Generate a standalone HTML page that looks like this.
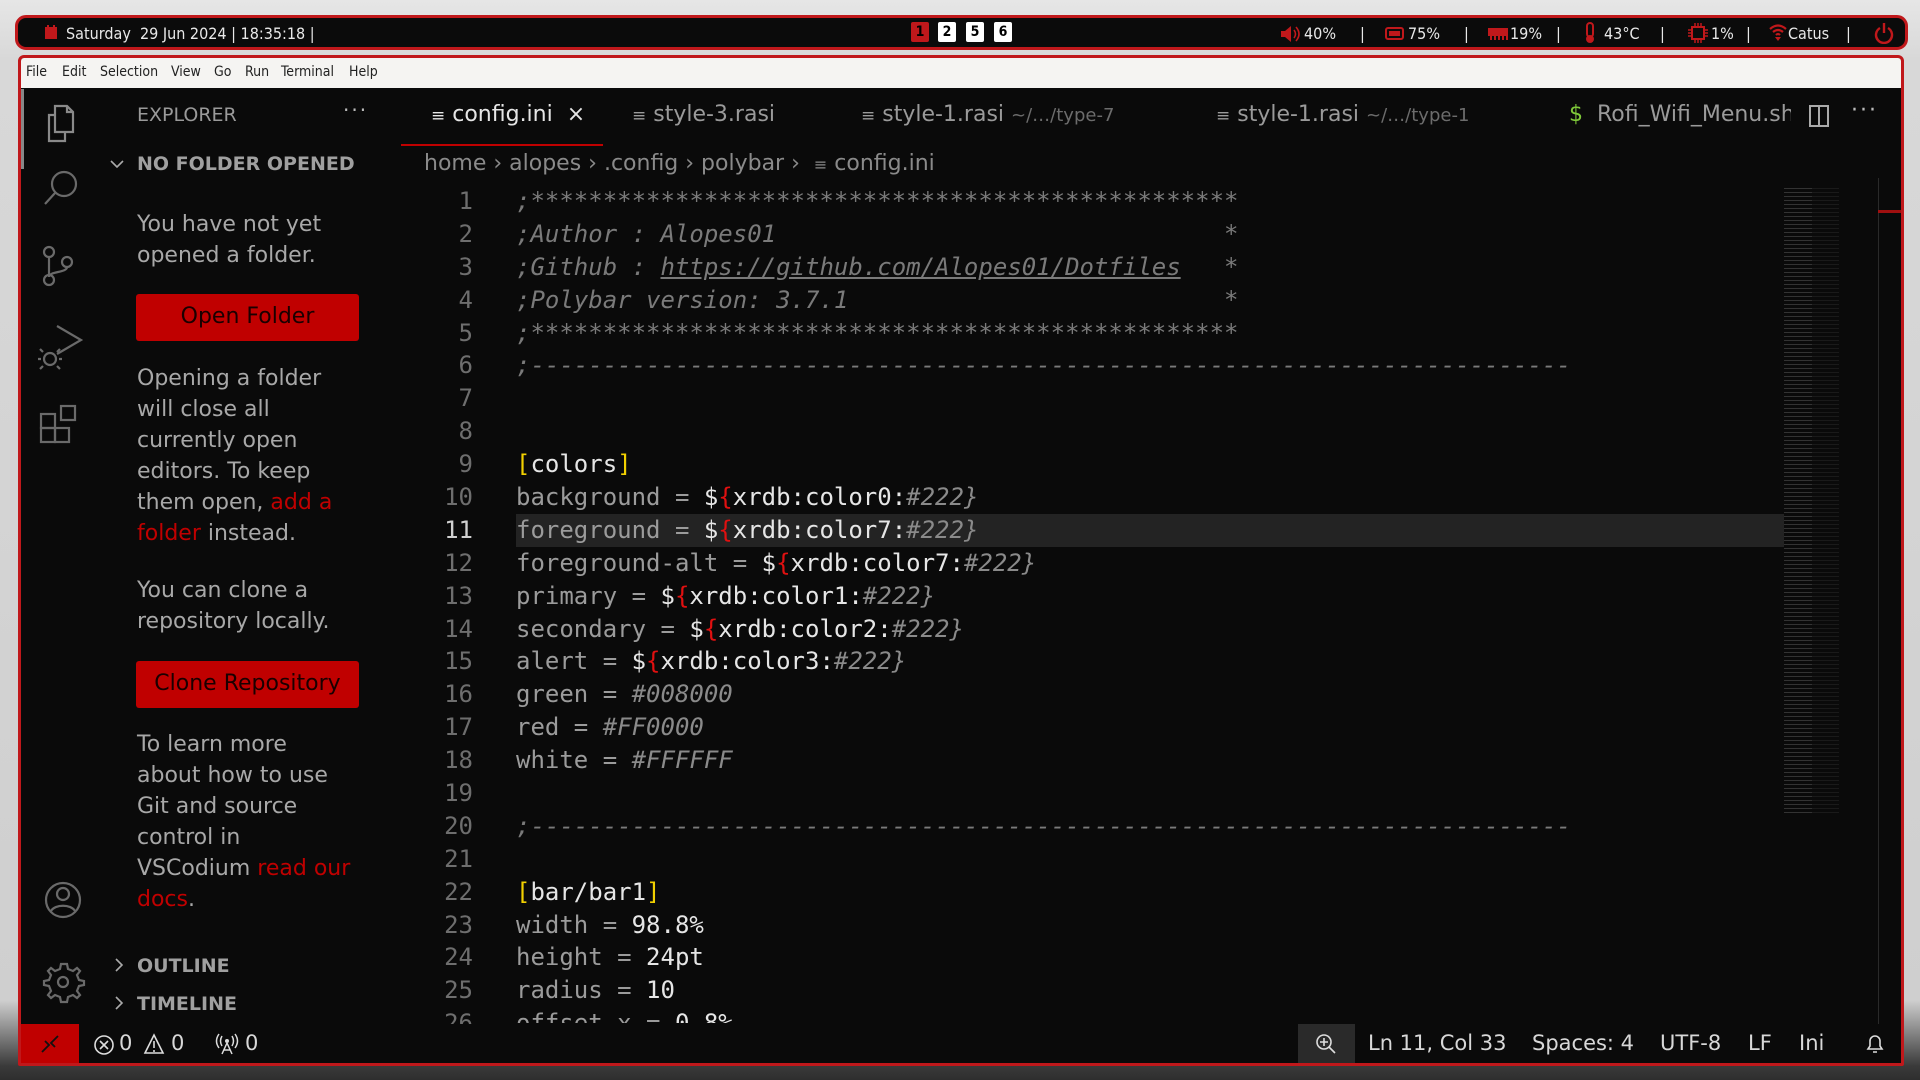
<!DOCTYPE html>
<html><head><meta charset="utf-8"><style>
*{margin:0;padding:0;box-sizing:border-box}
body{width:1920px;height:1080px;overflow:hidden;background:linear-gradient(#e6e6e6 0,#d8d8d8 60px,#cfcfcf 1000px,#3a3a3a 1066px,#2e2e2e 1080px);font-family:"DejaVu Sans","Liberation Sans",sans-serif;position:relative}
.abs{position:absolute}
#bar{left:15px;top:15px;width:1893px;height:35px;background:#0b0b0b;border:3px solid #c0181b;border-radius:11px;color:#e8e8e8;font-family:"DejaVu Sans Condensed","DejaVu Sans",sans-serif;font-size:16px}
#bar span{position:absolute;top:6px;white-space:pre}
#bar svg{position:absolute;top:7px}
.ws{position:absolute;top:4px;width:18px;height:20px;background:#fff;color:#000;font-weight:bold;font-size:14px;text-align:center;line-height:20px;border-radius:2px}
#win{left:18px;top:55px;width:1886px;height:1011px;border:3px solid #c0181b;background:#0a0a0a;border-radius:6px 6px 2px 2px;overflow:hidden}
#menu{left:0;top:0;width:100%;height:30px;background:#f5f4f2;font-family:"DejaVu Sans Condensed","DejaVu Sans",sans-serif;font-size:14px;color:#222}
#menu span{position:absolute;top:6px}
.side{color:#a8a8a8;font-size:22px;line-height:31px}
.btn{position:absolute;left:115px;width:223px;height:47px;background:#c00000;border-radius:3px;color:#1a0000;font-size:22px;text-align:center;line-height:46px}
.red{color:#c00000}
.tab{position:absolute;top:44px;font-size:22px;color:#9a9a9a;white-space:pre}
.tab .d{font-size:18px;color:#6c6c6c}
.code{position:absolute;left:495px;top:127px;font-family:"DejaVu Sans Mono","Liberation Mono",monospace;font-size:24px;color:#9b9b9b}
.code div{height:32.9px;line-height:32.9px;white-space:pre}
.ln{position:absolute;left:378px;top:127px;width:74px;text-align:right;font-family:"DejaVu Sans Mono","Liberation Mono",monospace;font-size:24px;color:#6e6e6e}
.ln div{height:32.9px;line-height:32.9px}
.c{font-style:italic;color:#7a7a7a}
.w{color:#e6e6e6}
.r{color:#e01010}
.y{color:#f2d000}
.h{font-style:italic;color:#8a8a8a}
#status{left:0;top:966px;width:100%;height:39px;background:#0a0a0a;color:#d8d8d8;font-size:21px}
#status span{position:absolute;top:7px;white-space:pre}
.mm{position:absolute;left:1766px;height:2px;background:#4a4a4a}
</style></head><body>
<div id="bar" class="abs">
<svg style="left:26px;top:6px" width="14" height="16"><rect x="1" y="3" width="12" height="12" fill="#c0181b"/><path d="M4 1v4M10 1v4" stroke="#c0181b" stroke-width="2"/></svg>
<span style="left:48px">Saturday  29 Jun 2024 | 18:35:18 |</span>
<div class="ws" style="left:893px;background:#c0181b;color:#000">1</div>
<div class="ws" style="left:920px">2</div>
<div class="ws" style="left:948px">5</div>
<div class="ws" style="left:976px">6</div>
<svg style="left:1262px" width="20" height="18"><path d="M1 6h4l6-5v16l-6-5H1z" fill="#c0181b"/><path d="M14 5q3 4 0 8M16 2q6 7 0 14" stroke="#c0181b" stroke-width="1.6" fill="none"/></svg><span style="left:1286px">40%</span>
<span style="left:1342px">|</span>
<svg style="left:1367px;top:9px" width="20" height="14"><rect x="1" y="1" width="17" height="11" rx="2" fill="none" stroke="#c0181b" stroke-width="2"/><rect x="4" y="4" width="11" height="5" fill="#c0181b"/></svg><span style="left:1390px">75%</span>
<span style="left:1446px">|</span>
<svg style="left:1470px" width="20" height="16"><rect x="0" y="3" width="20" height="8" fill="#c0181b"/><path d="M3 11v4M7 11v4M11 11v4M15 11v4M19 11v4" stroke="#c0181b" stroke-width="2"/></svg><span style="left:1492px">19%</span>
<span style="left:1538px">|</span>
<svg style="left:1566px;top:4px" width="12" height="22"><rect x="3" y="1" width="6" height="14" rx="3" fill="none" stroke="#c0181b" stroke-width="2"/><circle cx="6" cy="17" r="4" fill="#c0181b"/></svg><span style="left:1586px">43°C</span>
<span style="left:1642px">|</span>
<svg style="left:1670px;top:5px" width="20" height="20"><rect x="4" y="4" width="12" height="12" fill="none" stroke="#c0181b" stroke-width="2"/><path d="M7 0v4M10 0v4M13 0v4M7 16v4M10 16v4M13 16v4M0 7h4M0 10h4M0 13h4M16 7h4M16 10h4M16 13h4" stroke="#c0181b" stroke-width="1.5"/></svg><span style="left:1693px">1%</span>
<span style="left:1728px">|</span>
<svg style="left:1750px;top:5px" width="20" height="18"><path d="M2 6q8-7 16 0M5 9q5-4 10 0M8 12q2-2 4 0" stroke="#c0181b" stroke-width="2.2" fill="none"/><path d="M10 18l-3-4h6z" fill="#c0181b"/></svg><span style="left:1770px">Catus</span>
<span style="left:1828px">|</span>
<svg style="left:1856px;top:4px" width="20" height="22"><path d="M6 6a8 8 0 1 0 8 0" stroke="#c0181b" stroke-width="2.4" fill="none"/><path d="M10 1v10" stroke="#c0181b" stroke-width="2.4"/></svg>
</div>
<div id="win" class="abs">
<div id="menu" class="abs"><span style="left:5px">File</span><span style="left:41px">Edit</span><span style="left:79px">Selection</span><span style="left:150px">View</span><span style="left:193px">Go</span><span style="left:224px">Run</span><span style="left:260px">Terminal</span><span style="left:328px">Help</span></div>
<div class="abs" style="left:0;top:31px;width:3px;height:80px;background:#888"></div>
<svg class="abs" style="left:0;top:30px" width="80" height="940" fill="none" stroke="#6a6a6a" stroke-width="2.2">
<path d="M34 18h12l6 6v20H34z M46 18v6h6 M34 27h-6v26h16v-9" stroke="#8a8a8a"/>
<circle cx="43" cy="96" r="12"/><path d="M34 105l-10 11"/>
<circle cx="28" cy="164" r="5"/><circle cx="28" cy="192" r="5"/><circle cx="46" cy="174" r="5"/><path d="M28 169v18 M46 179c0 6-18 4-18 10"/>
<path d="M36 238l24 14-24 14" /><circle cx="29" cy="271" r="6"/><path d="M20 271h-3 M38 271h3 M22 264l-3-3 M36 264l3-3 M22 278l-3 3 M36 278l3 3"/>
<rect x="20" y="326" width="14" height="14"/><rect x="20" y="340" width="14" height="14"/><rect x="34" y="340" width="14" height="14"/><rect x="40" y="318" width="14" height="14"/>
<circle cx="42" cy="812" r="17"/><circle cx="42" cy="806" r="6"/><path d="M30 823c4-7 20-7 24 0"/>
<circle cx="42" cy="894" r="5"/><path d="M42 876l4 0 1 5 5 2 4-3 3 3-3 4 2 5 5 1v4l-5 1-2 5 3 4-3 3-4-3-5 2-1 5h-6l-1-5-5-2-4 3-3-3 3-4-2-5-5-1v-4l5-1 2-5-3-4 3-3 4 3 5-2 1-5z"/>
</svg>
<div class="abs" style="left:116px;top:46px;font-size:19px;color:#9a9a9a">EXPLORER</div>
<div class="abs" style="left:322px;top:40px;font-size:20px;color:#bbb;letter-spacing:2px">···</div>
<svg class="abs" style="left:88px;top:100px" width="16" height="12"><path d="M2 3l6 6 6-6" stroke="#aaa" stroke-width="1.6" fill="none"/></svg>
<div class="abs" style="left:116px;top:95px;font-size:19px;font-weight:bold;color:#a0a0a0">NO FOLDER OPENED</div>
<div class="abs side" style="left:116px;top:151px">You have not yet<br>opened a folder.</div>
<div class="btn" style="top:236px">Open Folder</div>
<div class="abs side" style="left:116px;top:305px">Opening a folder<br>will close all<br>currently open<br>editors. To keep<br>them open, <span class="red">add a</span><br><span class="red">folder</span> instead.</div>
<div class="abs side" style="left:116px;top:517px">You can clone a<br>repository locally.</div>
<div class="btn" style="top:603px">Clone Repository</div>
<div class="abs side" style="left:116px;top:671px">To learn more<br>about how to use<br>Git and source<br>control in<br>VSCodium <span class="red">read our</span><br><span class="red">docs</span>.</div>
<svg class="abs" style="left:92px;top:899px" width="12" height="16"><path d="M3 2l6 6-6 6" stroke="#aaa" stroke-width="1.6" fill="none"/></svg>
<div class="abs" style="left:116px;top:897px;font-size:19px;font-weight:bold;color:#a0a0a0">OUTLINE</div>
<svg class="abs" style="left:92px;top:937px" width="12" height="16"><path d="M3 2l6 6-6 6" stroke="#aaa" stroke-width="1.6" fill="none"/></svg>
<div class="abs" style="left:116px;top:935px;font-size:19px;font-weight:bold;color:#a0a0a0">TIMELINE</div>
<div class="abs" style="left:380px;top:86px;width:202px;height:2px;background:#c00000"></div>
<div class="tab" style="left:410px;color:#e6e6e6"><span style="font-size:17px">&#x2261;</span> config.ini  ×</div>
<div class="tab" style="left:611px"><span style="font-size:17px">&#x2261;</span> style-3.rasi</div>
<div class="tab" style="left:840px"><span style="font-size:17px">&#x2261;</span> style-1.rasi <span class="d">~/…/type-7</span></div>
<div class="tab" style="left:1195px"><span style="font-size:17px">&#x2261;</span> style-1.rasi <span class="d">~/…/type-1</span></div>
<div class="tab" style="left:1548px;width:222px;overflow:hidden"><span style="color:#7ec839">$</span>  Rofi_Wifi_Menu.sh</div>
<div class="abs" style="left:1788px;top:47px;width:20px;height:22px;border:2px solid #aaa"><div style="position:absolute;left:7px;top:0;width:2px;height:18px;background:#aaa"></div></div>
<div class="tab" style="left:1830px;color:#bbb;letter-spacing:2px;top:40px">···</div>
<div class="abs" style="left:403px;top:93px;font-size:22px;color:#8a8a8a;white-space:pre">home › alopes › .config › polybar ›  <span style="font-size:16px">&#x2261;</span> config.ini</div>
<div class="abs" style="left:495px;top:456px;width:1280px;height:33px;background:#232323"></div>
<div class="ln"><div>1</div><div>2</div><div>3</div><div>4</div><div>5</div><div>6</div><div>7</div><div>8</div><div>9</div><div>10</div><div style="color:#d0d0d0">11</div><div>12</div><div>13</div><div>14</div><div>15</div><div>16</div><div>17</div><div>18</div><div>19</div><div>20</div><div>21</div><div>22</div><div>23</div><div>24</div><div>25</div><div>26</div></div>
<div class="code" style="height:838px;overflow:hidden"><div class="c">;*************************************************</div><div class="c">;Author : Alopes01                               *</div><div class="c">;Github : <u>https://github.com/Alopes01/Dotfiles</u>   *</div><div class="c">;Polybar version: 3.7.1                          *</div><div class="c">;*************************************************</div><div class="c">;------------------------------------------------------------------------</div><div> </div><div> </div><div><span class="y">[</span><span class="w">colors</span><span class="y">]</span></div><div>background = <span class="w">$</span><span class="r">{</span><span class="w">xrdb:color0:</span><span class="h">#222}</span></div><div>foreground = <span class="w">$</span><span class="r">{</span><span class="w">xrdb:color7:</span><span class="h">#222}</span></div><div>foreground-alt = <span class="w">$</span><span class="r">{</span><span class="w">xrdb:color7:</span><span class="h">#222}</span></div><div>primary = <span class="w">$</span><span class="r">{</span><span class="w">xrdb:color1:</span><span class="h">#222}</span></div><div>secondary = <span class="w">$</span><span class="r">{</span><span class="w">xrdb:color2:</span><span class="h">#222}</span></div><div>alert = <span class="w">$</span><span class="r">{</span><span class="w">xrdb:color3:</span><span class="h">#222}</span></div><div>green = <span class="h">#008000</span></div><div>red = <span class="h">#FF0000</span></div><div>white = <span class="h">#FFFFFF</span></div><div> </div><div class="c">;------------------------------------------------------------------------</div><div> </div><div><span class="y">[</span><span class="w">bar/bar1</span><span class="y">]</span></div><div>width = <span class="w">98.8%</span></div><div>height = <span class="w">24pt</span></div><div>radius = <span class="w">10</span></div><div>offset-x = <span class="w">0.8%</span></div></div>
<div class="abs" style="left:1763px;top:128px;width:76px;height:630px;background:repeating-linear-gradient(#0a0a0a 0,#0a0a0a 2px,#333 2px,#333 3px,#0a0a0a 3px,#0a0a0a 4px);-webkit-mask:linear-gradient(90deg,#000 0,#000 28px,rgba(0,0,0,.4) 28px,rgba(0,0,0,.4) 55px,transparent 55px)"></div>
<div class="abs" style="left:1857px;top:120px;width:1px;height:846px;background:#2a2a2a"></div>
<div class="abs" style="left:1857px;top:152px;width:30px;height:3px;background:#a01010"></div>
<div id="status" class="abs">
<div class="abs" style="left:0;top:0;width:58px;height:39px;background:#c00000"></div>
<svg class="abs" style="left:18px;top:9px" width="22" height="22"><path d="M3 19l7-7-4-4M19 3l-7 7 4 4" stroke="#111" stroke-width="1.8" fill="none"/></svg>
<svg class="abs" style="left:72px;top:10px" width="22" height="22"><circle cx="11" cy="11" r="9" stroke="#ddd" stroke-width="1.6" fill="none"/><path d="M7 7l8 8M15 7l-8 8" stroke="#ddd" stroke-width="1.6"/></svg>
<span style="left:98px">0</span>
<svg class="abs" style="left:122px;top:9px" width="22" height="22"><path d="M11 2l9 18H2z" stroke="#ddd" stroke-width="1.6" fill="none"/><path d="M11 8v7M11 17v2" stroke="#ddd" stroke-width="1.6"/></svg>
<span style="left:150px">0</span>
<svg class="abs" style="left:194px;top:9px" width="24" height="22"><circle cx="12" cy="8" r="2" fill="#ddd"/><path d="M7 3q-3 5 0 10M17 3q3 5 0 10M4 1q-5 7 0 14M20 1q5 7 0 14M12 10l-5 11M12 10l5 11M9 17h6" stroke="#ddd" stroke-width="1.5" fill="none"/></svg>
<span style="left:224px">0</span>
<div class="abs" style="left:1277px;top:0;width:57px;height:39px;background:#2a2a2a"></div>
<svg class="abs" style="left:1293px;top:8px" width="24" height="24"><circle cx="10" cy="10" r="7" stroke="#ddd" stroke-width="1.6" fill="none"/><path d="M15 15l6 6M10 6v8M6 10h8" stroke="#ddd" stroke-width="1.6"/></svg>
<span style="left:1347px">Ln 11, Col 33</span>
<span style="left:1511px">Spaces: 4</span>
<span style="left:1639px">UTF-8</span>
<span style="left:1727px">LF</span>
<span style="left:1778px">Ini</span>
<svg class="abs" style="left:1843px;top:8px" width="22" height="24"><path d="M4 17h14l-2-3V9a5 5 0 0 0-10 0v5z M9 20h4" stroke="#ddd" stroke-width="1.6" fill="none"/></svg>
</div>
</div>
</body></html>
